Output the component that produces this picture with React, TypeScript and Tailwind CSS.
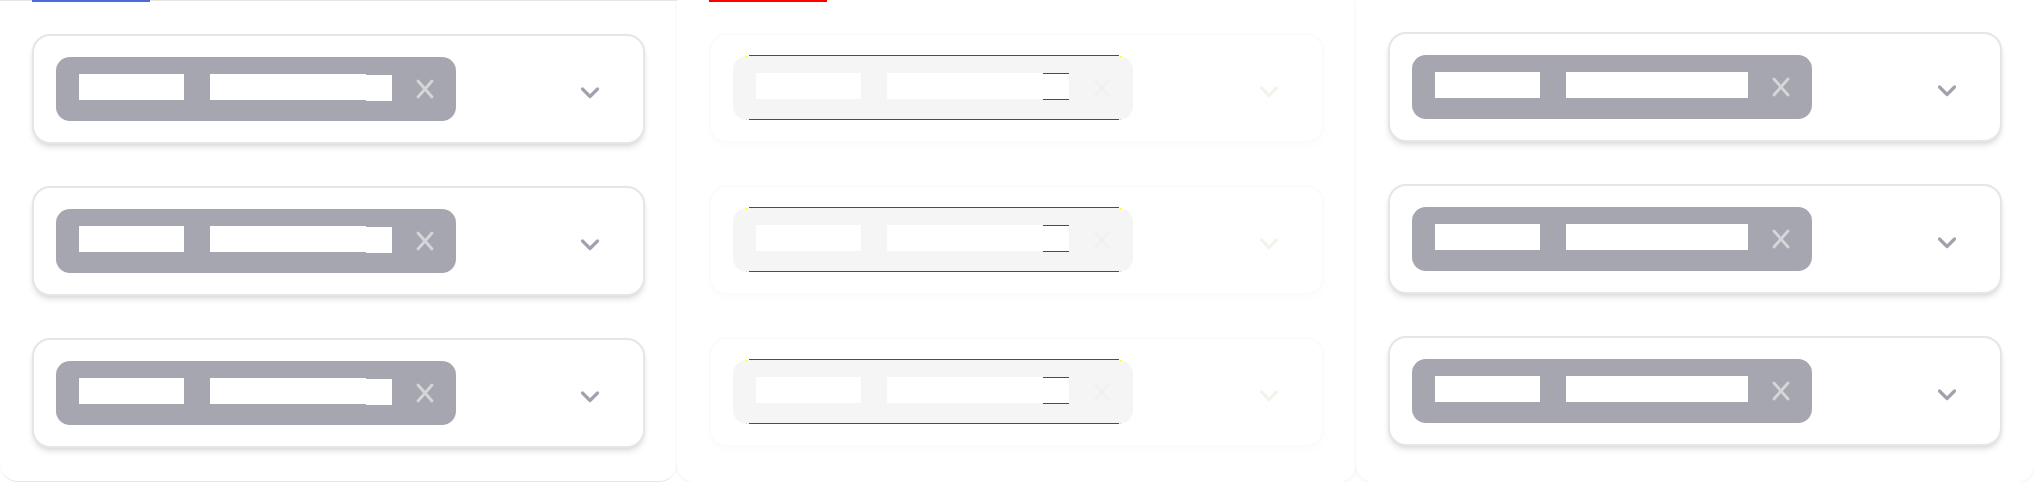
import React from 'react';

type Variant = 'base' | 'diff' | 'current';

function Chevron({ color }: { color: string }) {
  return (
    <svg width="22" height="14" viewBox="0 0 22 14" fill="none" className="mt-[7px]">
      <path d="M3.5 3 L11 10.5 L18.5 3" stroke={color} strokeWidth="3.2" strokeLinecap="round" strokeLinejoin="round" />
    </svg>
  );
}

function Cross({ color }: { color: string }) {
  return (
    <svg width="24" height="24" viewBox="0 0 24 24" fill="none">
      <path d="M5 4 L19 20 M19 4 L5 20" stroke={color} strokeWidth="2.8" strokeLinecap="round" />
    </svg>
  );
}

function SelectCard({ variant }: { variant: Variant }) {
  const diff = variant === 'diff';
  return (
    <div
      className={
        diff
          ? 'h-[110px] rounded-[18px] border-2 border-[#fbfbfb] bg-white shadow-[0_4px_8px_rgba(0,0,0,0.015)] flex items-center justify-between pl-[22px] pr-[42px]'
          : 'h-[110px] rounded-[18px] border-2 border-[#e6e6e8] bg-white shadow-[0_4px_6px_-1px_rgba(0,0,0,0.12),0_2px_4px_-2px_rgba(0,0,0,0.08)] flex items-center justify-between pl-[22px] pr-[42px]'
      }
    >
      <div
        className={
          diff
            ? 'relative h-16 w-[400px] rounded-[14px] bg-[#f5f5f5] flex items-center pl-[23px] pr-[19px]'
            : 'relative h-16 w-[400px] rounded-[14px] bg-[#a6a6b1] flex items-center pl-[23px] pr-[19px]'
        }
      >
        <div className="w-[105px] h-[26px] bg-white -mt-[4px]" />
        {variant === 'current' ? (
          <div className="ml-[26px] w-[182px] h-[26px] bg-white -mt-[4px]" />
        ) : (
          <div className="ml-[26px] flex items-start -mt-[4px]">
            <div className="w-[156px] h-[26px] bg-white" />
            <div className="w-[26px] h-[26px] bg-white mt-[1px]" />
          </div>
        )}
        <div className="ml-auto">
          <Cross color={diff ? '#f1f1f1' : '#d6d6da'} />
        </div>
        {diff && (
          <>
            <div className="absolute -top-px left-[16px] right-[14px] h-px bg-[#ff0000]" />
            <div className="absolute bottom-0 left-[16px] right-[14px] h-px bg-[#ff0000]" />
            <div className="absolute top-[17px] left-[310px] w-[26px] h-px bg-[#ff0000]" />
            <div className="absolute top-[43px] left-[310px] w-[26px] h-px bg-[#ff0000]" />
            <div className="absolute top-0 left-[13px] w-px h-px bg-[#ffee00]" />
            <div className="absolute top-0 right-[12px] w-px h-px bg-[#ffee00]" />
            <div className="absolute bottom-0 left-[13px] w-px h-px bg-[#ffee00]" />
            <div className="absolute bottom-0 right-[12px] w-px h-px bg-[#ffee00]" />
          </>
        )}
      </div>
      <Chevron color={diff ? '#f3f3ee' : '#a2a2ae'} />
    </div>
  );
}

function Panel({ variant, width }: { variant: Variant; width: string }) {
  const shell =
    variant === 'base'
      ? 'relative h-[482px] rounded-b-[18px] bg-white border-t border-b border-[#e6e6e6]'
      : 'relative h-[482px] rounded-b-[18px] bg-white shadow-[0_1px_4px_rgba(0,0,0,0.06)]';
  const body =
    variant === 'current'
      ? 'flex flex-col gap-[42px] px-8 pt-[32px]'
      : 'flex flex-col gap-[42px] px-8 pt-[33px]';
  return (
    <div className={`${width} shrink-0`}>
      <div className={shell}>
        {variant === 'base' && <div className="absolute -top-px left-8 w-[118px] h-[2px] bg-[#4e6ad8]" />}
        {variant === 'diff' && <div className="absolute top-0 left-8 w-[118px] h-[2px] bg-[#ff0000]" />}
        <div className={body}>
          <SelectCard variant={variant} />
          <SelectCard variant={variant} />
          <SelectCard variant={variant} />
        </div>
      </div>
    </div>
  );
}

export default function App() {
  return (
    <div className="w-[2034px] h-[482px] bg-white flex overflow-hidden font-['Inter',sans-serif]">
      <Panel variant="base" width="w-[677px]" />
      <Panel variant="diff" width="w-[679px]" />
      <Panel variant="current" width="w-[678px]" />
    </div>
  );
}
